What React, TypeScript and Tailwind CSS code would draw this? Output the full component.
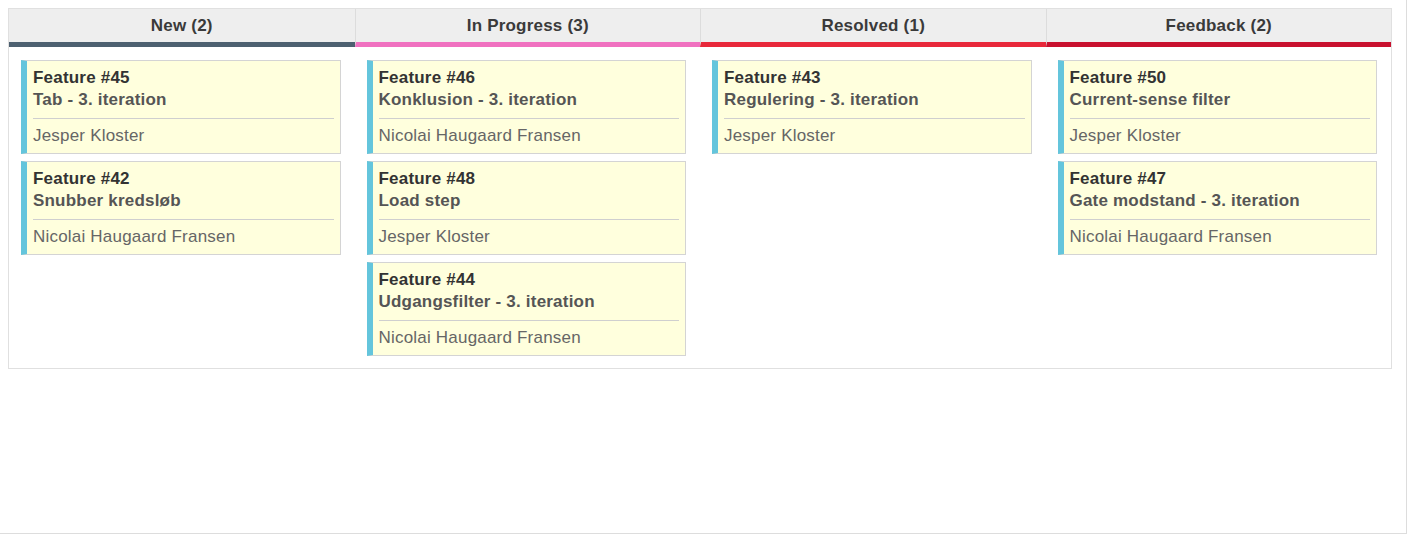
type Card = { id: number; title: string; assignee: string };

type Column = { name: string; bar: string; cards: Card[] };

const columns: Column[] = [
  {
    name: "New",
    bar: "border-b-[#4d6070]",
    cards: [
      { id: 45, title: "Tab - 3. iteration", assignee: "Jesper Kloster" },
      { id: 42, title: "Snubber kredsløb", assignee: "Nicolai Haugaard Fransen" },
    ],
  },
  {
    name: "In Progress",
    bar: "border-b-[#f071c0]",
    cards: [
      { id: 46, title: "Konklusion - 3. iteration", assignee: "Nicolai Haugaard Fransen" },
      { id: 48, title: "Load step", assignee: "Jesper Kloster" },
      { id: 44, title: "Udgangsfilter - 3. iteration", assignee: "Nicolai Haugaard Fransen" },
    ],
  },
  {
    name: "Resolved",
    bar: "border-b-[#e8283a]",
    cards: [{ id: 43, title: "Regulering - 3. iteration", assignee: "Jesper Kloster" }],
  },
  {
    name: "Feedback",
    bar: "border-b-[#c8102e]",
    cards: [
      { id: 50, title: "Current-sense filter", assignee: "Jesper Kloster" },
      { id: 47, title: "Gate modstand - 3. iteration", assignee: "Nicolai Haugaard Fransen" },
    ],
  },
];

const IssueCard = ({ card }: { card: Card }) => (
  <div className="h-[94px] border border-[#d4d4d4] border-l-[6px] border-l-[#64c5dc] bg-[#ffffdd] pl-[6px] pr-[6px] pt-[6px] text-[17px] leading-[22px] tracking-[0.2px]">
    <div className="font-bold text-[#333]">Feature #{card.id}</div>
    <div className="font-bold text-[#555]">{card.title}</div>
    <div className="mt-[7px] border-t border-[#cfcfcf] pt-[6px] text-[#666]">{card.assignee}</div>
  </div>
);

export default function App() {
  return (
    <div
      className="h-[534px] w-[1407px] border-r border-b border-[#dddddd] bg-white pt-2 pl-2 pr-[14px]"
      style={{ fontFamily: '"Liberation Sans", Arial, sans-serif' }}
    >
      <div className="border border-[#e0e0e0]">
        {/* Column headers */}
        <div className="grid grid-cols-4 bg-[#eeeeee]">
          {columns.map((col, i) => (
            <div
              key={col.name}
              className={`h-[38px] border-b-[5px] ${col.bar} ${i > 0 ? "border-l border-l-[#dcdcdc]" : ""} flex items-center justify-center pt-[1px] text-[17px] font-bold tracking-[0.2px] text-[#3a3a3a]`}
            >
              {col.name} ({col.cards.length})
            </div>
          ))}
        </div>

        {/* Column bodies */}
        <div className="grid grid-cols-4 items-start">
          {columns.map((col) => (
            <div key={col.name} className="flex flex-col gap-[7px] pt-[13px] pb-[12px] pl-3 pr-[14px]">
              {col.cards.map((card) => (
                <IssueCard key={card.id} card={card} />
              ))}
            </div>
          ))}
        </div>
      </div>
    </div>
  );
}
